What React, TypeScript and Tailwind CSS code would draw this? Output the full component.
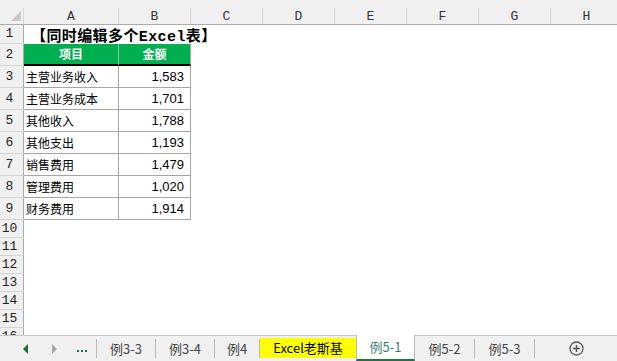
import React from 'react';

const rows = [
  { name: '主营业务收入', amount: '1,583' },
  { name: '主营业务成本', amount: '1,701' },
  { name: '其他收入', amount: '1,788' },
  { name: '其他支出', amount: '1,193' },
  { name: '销售费用', amount: '1,479' },
  { name: '管理费用', amount: '1,020' },
  { name: '财务费用', amount: '1,914' },
];

const otherCols = ['C', 'D', 'E', 'F', 'G', 'H'];
const emptyRows = [10, 11, 12, 13, 14, 15, 16];

const headFont = { fontFamily: '"Liberation Mono", "DejaVu Sans Mono", monospace' };
const cellFont = { fontFamily: '"Noto Sans CJK SC", "Liberation Sans", sans-serif' };
const numFont = { fontFamily: '"Liberation Sans", Arial, sans-serif' };

function RowHead({ n, h }: { n: number; h: string }) {
  return (
    <div
      className={`${h} w-[24px] shrink-0 bg-[#f0f0f0] border-r border-r-[#ababab] border-b border-b-[#d4d4d4] flex items-center justify-center pr-[4px] text-[13px] text-[#222]`}
      style={headFont}
    >
      {n}
    </div>
  );
}

export default function App() {
  return (
    <div className="w-[617px] h-[361px] bg-white overflow-hidden flex flex-col select-none">
      {/* column headers */}
      <div className="h-[25px] shrink-0 flex bg-[#f0f0f0] border-b border-[#ababab]">
        <div className="w-[24px] shrink-0 relative border-r border-[#d4d4d4] mt-[8px]">
          <div className="absolute right-[2px] bottom-[3px] w-0 h-0 border-l-[10px] border-l-transparent border-b-[10px] border-b-[#c8c8c8]" />
        </div>
        {['A', 'B', ...otherCols].map((c, i) => (
          <div
            key={c}
            className={`${i === 0 ? 'w-[95px]' : 'w-[72px]'} shrink-0 mt-[8px] border-r border-[#d4d4d4] flex items-center justify-center text-[13px] text-[#333] leading-none`}
            style={headFont}
          >
            {c}
          </div>
        ))}
      </div>

      {/* grid */}
      <div className="flex-1 overflow-hidden">
        {/* row 1 */}
        <div className="flex h-[19px]">
          <RowHead n={1} h="h-[19px]" />
          <div className="relative flex-1">
            <div
              className="absolute left-[7px] top-[0px] whitespace-nowrap text-[15px] font-bold text-black leading-[19px] tracking-[0.4px]"
              style={cellFont}
            >
              【同时编辑多个<span style={headFont}>Excel</span>表】
            </div>
          </div>
        </div>

        {/* row 2: table header */}
        <div className="flex h-[22px]">
          <RowHead n={2} h="h-[22px]" />
          <div
            className="w-[95px] shrink-0 bg-[#00b050] border-b-2 border-b-black border-r border-r-[#7fd3a3] flex items-center justify-center text-white font-bold text-[12px]"
            style={cellFont}
          >
            项目
          </div>
          <div
            className="w-[72px] shrink-0 bg-[#00b050] border-b-2 border-b-black border-r border-r-[#a6a6a6] flex items-center justify-center text-white font-bold text-[12px]"
            style={cellFont}
          >
            金额
          </div>
        </div>

        {/* data rows */}
        {rows.map((r, i) => (
          <div key={r.name} className="flex h-[22px]">
            <RowHead n={i + 3} h="h-[22px]" />
            <div
              className="w-[95px] shrink-0 border-b border-r border-[#a6a6a6] flex items-center pl-[2px] text-[12px] text-black"
              style={cellFont}
            >
              {r.name}
            </div>
            <div
              className="w-[72px] shrink-0 border-b border-r border-[#a6a6a6] flex items-center justify-end pr-[6px] text-[13px] text-black"
              style={numFont}
            >
              {r.amount}
            </div>
          </div>
        ))}

        {/* empty rows */}
        {emptyRows.map((n) => (
          <div key={n} className="flex h-[18px]">
            <RowHead n={n} h="h-[18px]" />
          </div>
        ))}
      </div>

      {/* sheet tabs */}
      <div className="h-[26px] shrink-0 bg-[#f0f0f0] border-t border-[#c6c6c6] flex items-stretch text-[13px] text-[#444]" style={cellFont}>
        <div className="w-[96px] shrink-0 flex items-center">
          <div className="ml-[23px] w-0 h-0 border-y-[5px] border-y-transparent border-r-[5px] border-r-[#1e6b3c]" />
          <div className="ml-[24px] w-0 h-0 border-y-[5px] border-y-transparent border-l-[5px] border-l-[#a8a8a8]" />
          <div className="ml-[20px] flex gap-[2px] items-end mt-[5px]">
            <span className="w-[2px] h-[2px] bg-[#1e6b3c]" />
            <span className="w-[2px] h-[2px] bg-[#1e6b3c]" />
            <span className="w-[2px] h-[2px] bg-[#1e6b3c]" />
          </div>
        </div>
        <div className="w-px bg-[#b8b8b8] my-[3px]" />
        <div className="w-[58px] flex items-center justify-center">例3-3</div>
        <div className="w-px bg-[#b8b8b8] my-[3px]" />
        <div className="w-[58px] flex items-center justify-center">例3-4</div>
        <div className="w-px bg-[#b8b8b8] my-[3px]" />
        <div className="w-[44px] flex items-center justify-center">例4</div>
        <div className="w-px bg-[#b8b8b8] my-[3px]" />
        <div className="w-[96px] flex items-center justify-center">
          <div className="w-full h-[20px] mb-[2px] bg-[#ffff00] flex items-center justify-center text-black">Excel老斯基</div>
        </div>
        <div className="w-[59px] -mt-px bg-white border-x border-[#b8b8b8] border-b-2 border-b-[#217346] flex items-center justify-center text-[#3f7f6e]">
          例5-1
        </div>
        <div className="w-[59px] flex items-center justify-center">例5-2</div>
        <div className="w-px bg-[#b8b8b8] my-[3px]" />
        <div className="w-[59px] flex items-center justify-center">例5-3</div>
        <div className="w-px bg-[#b8b8b8] my-[3px]" />
        <div className="flex-1 flex items-center justify-center">
          <svg width="15" height="15" viewBox="0 0 15 15">
            <circle cx="7.5" cy="7.5" r="6.5" fill="none" stroke="#555" strokeWidth="1.3" />
            <path d="M7.5 4v7M4 7.5h7" stroke="#555" strokeWidth="1.5" />
          </svg>
        </div>
      </div>
    </div>
  );
}
